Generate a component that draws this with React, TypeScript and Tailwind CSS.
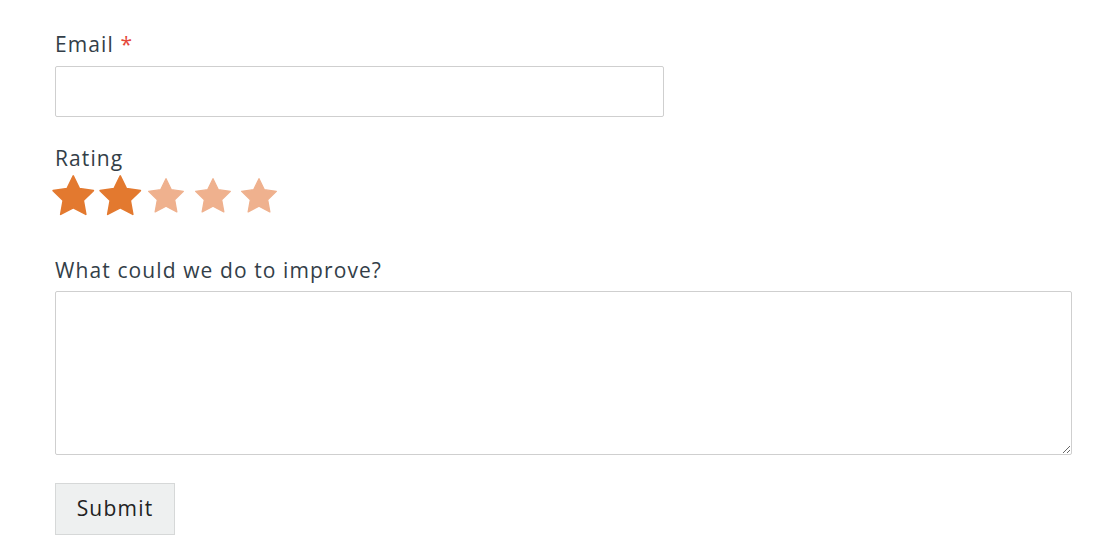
import React from "react";

const Star = ({ size, color }: { size: number; color: string }) => (
  <svg width={size} height={size} viewBox="0 0 24 24">
    <path
      d="M12 1.6l3.2 6.6 7.2 1-5.2 5.1 1.3 7.2L12 18.1l-6.5 3.4 1.3-7.2L1.6 9.2l7.2-1z"
      fill={color}
      stroke={color}
      strokeWidth="0.8"
      strokeLinejoin="round"
    />
  </svg>
);

export default function App() {
  const stars = [0, 1, 2, 3, 4];
  return (
    <div
      className="min-h-[557px] bg-white pl-[55px] pr-[45px] pt-[30px] text-[21px] tracking-[1.1px] text-[#333e48]"
      style={{ fontFamily: '"Open Sans", sans-serif' }}
    >
      <div className="flex flex-col">
        <label className="leading-[28px]">
          Email <span className="text-[#e5483b]">*</span>
        </label>
        <input
          type="text"
          className="mt-[8px] h-[51px] w-[609px] rounded-[2px] border border-[#cfcfcf] bg-white px-3 outline-none"
        />
      </div>
      <div className="mt-[27px] flex flex-col">
        <label className="leading-[28px]">Rating</label>
        <div className="mt-[2px] flex h-[44px] items-center -ml-[5px]">
          {stars.map((i) => (
            <div key={i} className="flex w-[46.5px] items-center justify-center">
              {i < 2 ? (
                <Star size={54} color="#e3792f" />
              ) : (
                <Star size={40} color="#efb18e" />
              )}
            </div>
          ))}
        </div>
      </div>
      <div className="mt-[38px] flex flex-col">
        <label className="leading-[28px]">What could we do to improve?</label>
        <textarea className="mt-[7px] h-[164px] w-[1017px] rounded-[2px] border border-[#cfcfcf] bg-white px-3 py-2 outline-none" />
      </div>
      <button className="mt-[28px] h-[52px] w-[120px] border border-[#d6d8d8] bg-[#eef0f0] text-[21px] tracking-[1.2px] text-[#222]">
        Submit
      </button>
    </div>
  );
}
